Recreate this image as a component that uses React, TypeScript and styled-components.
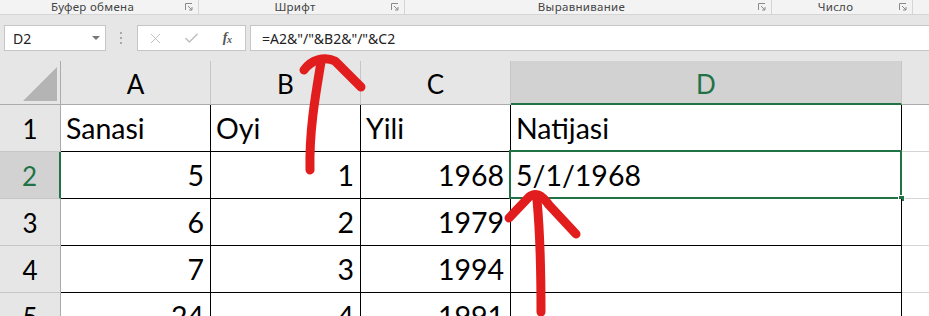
import styled, { createGlobalStyle } from "styled-components";
import { X, Check } from "lucide-react";

const GlobalStyle = createGlobalStyle`
  html, body {
    margin: 0;
    padding: 0;
    background: #e6e6e6;
  }
`;

const Page = styled.div`
  position: relative;
  width: 929px;
  height: 316px;
  overflow: hidden;
  background: #e6e6e6;
  font-family: "Noto Sans", "Open Sans", sans-serif;
`;

const GroupRow = styled.div`
  display: flex;
  height: 15px;
  box-sizing: border-box;
  background: #f3f3f3;
  border-bottom: 1px solid #d5d5d5;
`;

const Group = styled.div<{ $w?: number }>`
  display: flex;
  align-items: center;
  box-sizing: border-box;
  width: ${(p) => (p.$w ? `${p.$w}px` : "auto")};
  flex: ${(p) => (p.$w ? "none" : "1")};
  border-right: ${(p) => (p.$w ? "1px solid #d5d5d5" : "none")};
  padding-right: 5px;
`;

const GroupLabel = styled.span`
  flex: 1;
  text-align: center;
  font-size: 11.5px;
  line-height: 14px;
  color: #444;
  letter-spacing: 0.3px;
  white-space: nowrap;
`;

function Launcher() {
  return (
    <svg width="8" height="8" viewBox="0 0 8 8">
      <path d="M0.5 7V0.5H7" fill="none" stroke="#8a8a8a" strokeWidth="1" />
      <path d="M3 3L7 7M4 7H7V4" fill="none" stroke="#8a8a8a" strokeWidth="1" />
    </svg>
  );
}

const FormulaBand = styled.div`
  display: flex;
  align-items: center;
  height: 46px;
  box-sizing: border-box;
  padding: 10px 0 10px 4px;
`;

const NameBox = styled.div`
  display: flex;
  align-items: center;
  justify-content: space-between;
  width: 102px;
  height: 26px;
  box-sizing: border-box;
  padding: 0 5px 0 8px;
  background: #fff;
  border: 1px solid #c6c6c6;
  font-size: 14px;
  color: #222;
`;

const DropArrow = styled.span`
  width: 0;
  height: 0;
  border-left: 4px solid transparent;
  border-right: 4px solid transparent;
  border-top: 4px solid #777;
`;

const Dots = styled.div`
  display: flex;
  flex-direction: column;
  align-items: center;
  gap: 3px;
  width: 30px;
  margin-right: 1px;
`;

const Dot = styled.span`
  width: 2px;
  height: 2px;
  background: #a8a8a8;
`;

const ButtonsBox = styled.div`
  display: flex;
  width: 109px;
  height: 26px;
  box-sizing: border-box;
  background: #fff;
  border: 1px solid #c6c6c6;
`;

const BarButton = styled.div`
  flex: 1;
  display: flex;
  align-items: center;
  justify-content: center;
  color: #bdbdbd;
`;

const Fx = styled.span`
  font-family: "Liberation Serif", "DejaVu Serif", serif;
  font-style: italic;
  font-weight: bold;
  font-size: 14px;
  color: #555;
  letter-spacing: -0.5px;

  sub {
    font-size: 10px;
    vertical-align: -1px;
  }
`;

const FormulaInput = styled.div`
  flex: 1;
  display: flex;
  align-items: center;
  height: 26px;
  margin-left: 4px;
  box-sizing: border-box;
  padding-left: 11px;
  background: #fff;
  border: 1px solid #c6c6c6;
  border-right: none;
  font-size: 14px;
  color: #222;
  white-space: nowrap;
`;

const Sheet = styled.div`
  display: grid;
  grid-template-columns: 61px 150px 150px 150px 391px 1fr;
  grid-template-rows: 44px repeat(5, 47px);
  font-family: "Lato", "Noto Sans", sans-serif;
  line-height: 1;
`;

const Corner = styled.div`
  display: flex;
  align-items: flex-end;
  justify-content: flex-end;
  box-sizing: border-box;
  padding: 0 3px 3px 0;
  background: #e6e6e6;
  border-right: 1px solid #ababab;
  border-bottom: 1px solid #ababab;
`;

const ColHead = styled.div<{ $sel?: boolean; $last?: boolean }>`
  display: flex;
  align-items: flex-end;
  justify-content: center;
  box-sizing: border-box;
  padding-bottom: ${(p) => (p.$sel ? 6 : 7)}px;
  font-size: 26px;
  background: ${(p) => (p.$sel ? "#d2d2d2" : "#e6e6e6")};
  color: ${(p) => (p.$sel ? "#217346" : "#000")};
  border-right: ${(p) => (p.$last ? "none" : "1px solid #c6c6c6")};
  border-bottom: ${(p) => (p.$sel ? "2px solid #217346" : "1px solid #ababab")};
`;

const RowHead = styled.div<{ $sel?: boolean }>`
  display: flex;
  align-items: flex-end;
  justify-content: center;
  box-sizing: border-box;
  padding-bottom: 9px;
  font-size: 26px;
  background: ${(p) => (p.$sel ? "#d2d2d2" : "#e6e6e6")};
  color: ${(p) => (p.$sel ? "#217346" : "#000")};
  border-right: ${(p) => (p.$sel ? "2px solid #217346" : "1px solid #ababab")};
  border-bottom: 1px solid #c6c6c6;
`;

const Cell = styled.div<{ $right?: boolean }>`
  position: relative;
  display: flex;
  align-items: flex-end;
  justify-content: ${(p) => (p.$right ? "flex-end" : "flex-start")};
  box-sizing: border-box;
  padding: 0 6px 9px 5px;
  font-size: 28.5px;
  background: #fff;
  color: #000;
  border-right: 1px solid #000;
  border-bottom: 1px solid #000;
  white-space: nowrap;
`;

const EmptyCell = styled.div`
  background: #fff;
  border-bottom: 1px solid #d4d4d4;
`;

const Selection = styled.div`
  position: absolute;
  top: -2px;
  left: -2px;
  right: -1px;
  bottom: -1px;
  border: 2px solid #217346;
  pointer-events: none;
`;

const FillHandle = styled.span`
  position: absolute;
  right: -4px;
  bottom: -4px;
  width: 5px;
  height: 5px;
  background: #217346;
  outline: 1px solid #fff;
`;

const Ink = styled.svg`
  position: absolute;
  top: 0;
  left: 0;
  pointer-events: none;
`;

type Value = string | number;

const columns = ["A", "B", "C", "D"];
const rows: Value[][] = [
  ["Sanasi", "Oyi", "Yili", "Natijasi"],
  [5, 1, 1968, "5/1/1968"],
  [6, 2, 1979, ""],
  [7, 3, 1994, ""],
  [24, 4, 1991, ""],
];

export default function App() {
  return (
    <Page>
      <GlobalStyle />
      <GroupRow>
        <Group $w={199}>
          <GroupLabel>Буфер обмена</GroupLabel>
          <Launcher />
        </Group>
        <Group $w={206}>
          <GroupLabel>Шрифт</GroupLabel>
          <Launcher />
        </Group>
        <Group $w={367}>
          <GroupLabel>Выравнивание</GroupLabel>
          <Launcher />
        </Group>
        <Group $w={141}>
          <GroupLabel>Число</GroupLabel>
          <Launcher />
        </Group>
        <Group />
      </GroupRow>

      <FormulaBand>
        <NameBox>
          D2
          <DropArrow />
        </NameBox>
        <Dots>
          <Dot />
          <Dot />
          <Dot />
        </Dots>
        <ButtonsBox>
          <BarButton>
            <X size={17} strokeWidth={1.3} />
          </BarButton>
          <BarButton>
            <Check size={17} strokeWidth={2} />
          </BarButton>
          <BarButton>
            <Fx>
              f<sub>x</sub>
            </Fx>
          </BarButton>
        </ButtonsBox>
        <FormulaInput>=A2&amp;"/"&amp;B2&amp;"/"&amp;C2</FormulaInput>
      </FormulaBand>

      <Sheet>
        <Corner>
          <svg width="34" height="34" viewBox="0 0 34 34">
            <path d="M34 0V34H0Z" fill="#b4b4b4" />
          </svg>
        </Corner>
        {columns.map((c) => (
          <ColHead key={c} $sel={c === "D"}>
            {c}
          </ColHead>
        ))}
        <ColHead $last />
        {rows.map((r, i) => (
          <Row key={i} index={i + 1} values={r} />
        ))}
      </Sheet>

      <Ink width="929" height="316" viewBox="0 0 929 316">
        <g fill="none" stroke="#e21d1d" strokeWidth="9" strokeLinecap="round" strokeLinejoin="round">
          <path d="M321 62 C 316 92, 309 130, 310 170" />
          <path d="M304 70 C 311 60, 324 56, 335 61 L 361 87" />
          <path d="M541 312 C 541 270, 540 232, 537 200" />
          <path d="M509 218 L 529 197 C 535 192, 541 194, 549 205 L 576 234" />
        </g>
      </Ink>
    </Page>
  );
}

function Row({ index, values }: { index: number; values: Value[] }) {
  const selectedRow = index === 2;
  return (
    <>
      <RowHead $sel={selectedRow}>{index}</RowHead>
      {values.map((v, j) => (
        <Cell key={j} $right={typeof v === "number"}>
          {v}
          {selectedRow && j === 3 && (
            <Selection>
              <FillHandle />
            </Selection>
          )}
        </Cell>
      ))}
      <EmptyCell />
    </>
  );
}
